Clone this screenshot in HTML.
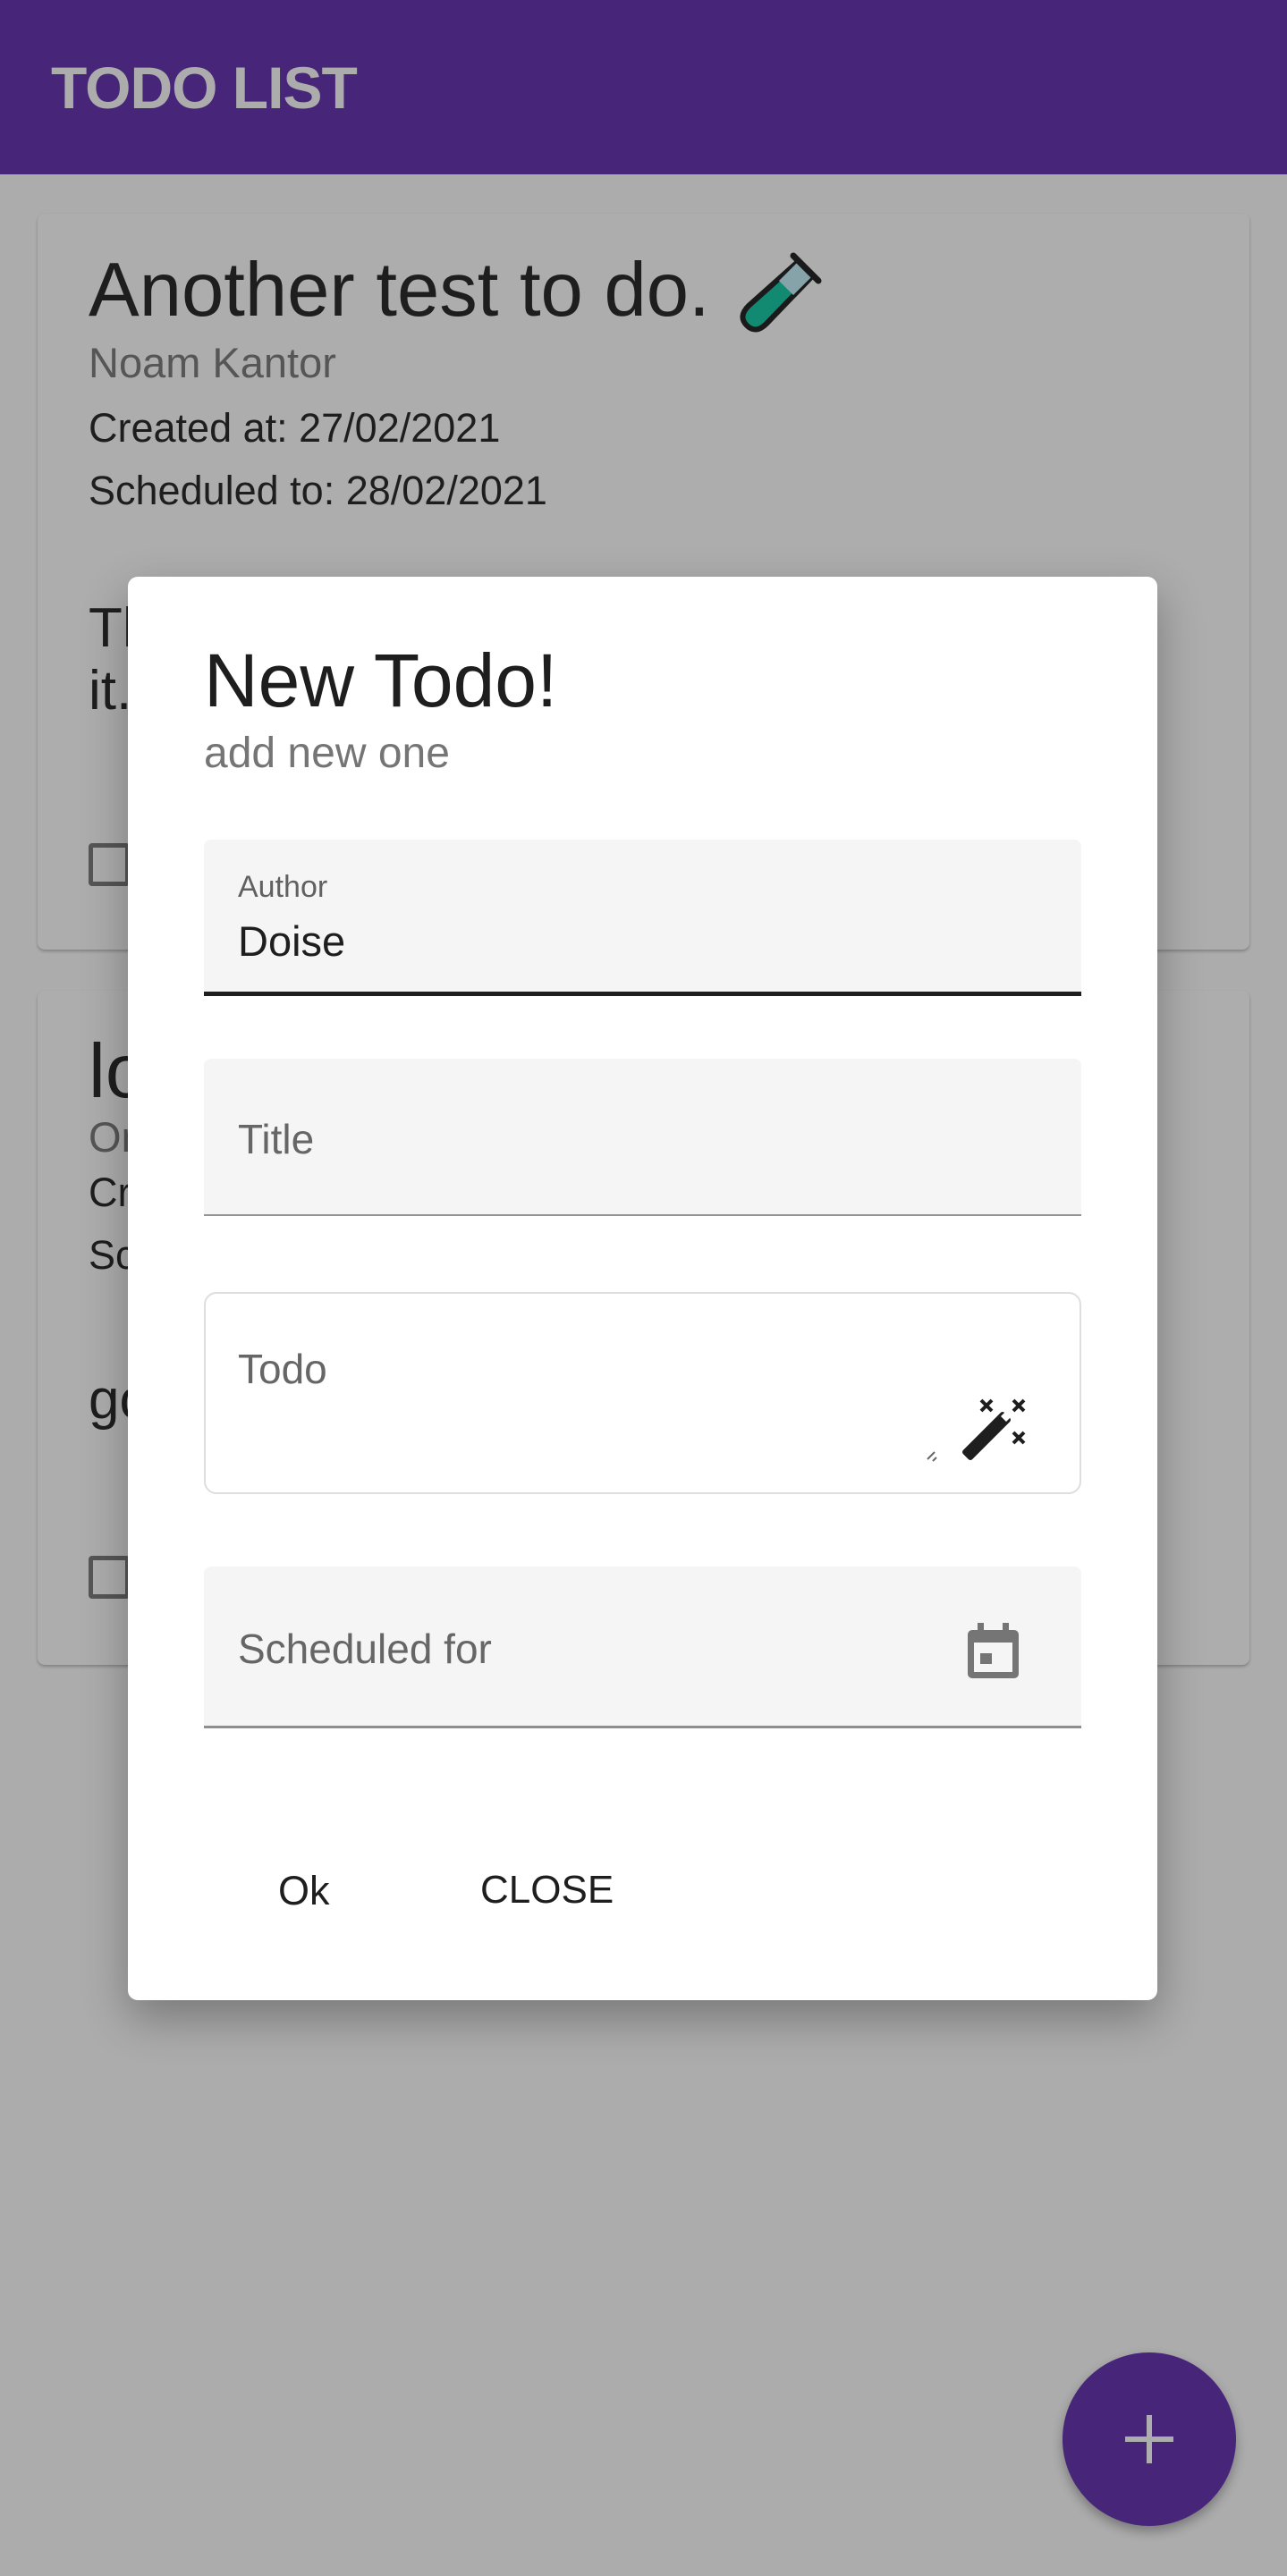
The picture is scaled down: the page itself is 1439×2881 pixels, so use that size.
<!DOCTYPE html>
<html><head><meta charset="utf-8"><style>
*{margin:0;padding:0;box-sizing:border-box}
body{width:1439px;height:2881px;background:#acacac;font-family:"Liberation Sans",Roboto,sans-serif;position:relative;overflow:hidden}
.a{position:absolute;white-space:nowrap}
.bar{position:absolute;left:0;top:0;width:1439px;height:195px;background:#47267a}
.card{position:absolute;left:42px;width:1355px;background:#adadad;border-radius:8px;box-shadow:0 2px 3px rgba(0,0,0,.25)}
.dlg{position:absolute;left:143px;top:645px;width:1151px;height:1592px;background:#fff;border-radius:11px;box-shadow:0 20px 50px rgba(0,0,0,.3)}
.fill{position:absolute;left:85px;width:981px;background:#f5f5f5;border-radius:8px 8px 0 0}
</style></head><body>
<div class="bar"></div>
<div class="a" style="left:57px;top:60px;font-size:66px;font-weight:bold;color:#acacac;letter-spacing:-1px">TODO LIST</div>

<div class="card" style="top:239px;height:823px"></div>
<div class="a" style="left:99px;top:276px;font-size:85px;color:#1e1e1e">Another test to do.</div>
<svg class="a" style="left:823px;top:278px" width="100" height="98" viewBox="0 0 100 98">
<path d="M70 14 L86 30 L34 84 Q22 96 12 86 Q2 76 14 64 Z" fill="#128a72" stroke="#1a1a1a" stroke-width="6" stroke-linejoin="round"/>
<path d="M70 14 L86 30 L64 52 L48 36 Z" fill="#86a3aa"/>
<path d="M64 8 L92 36" stroke="#1a1a1a" stroke-width="7" stroke-linecap="round"/>
</svg>
<div class="a" style="left:99px;top:378px;font-size:47px;color:#565656">Noam Kantor</div>
<div class="a" style="left:99px;top:453px;font-size:45px;color:#1e1e1e">Created at: 27/02/2021</div>
<div class="a" style="left:99px;top:523px;font-size:45px;color:#1e1e1e">Scheduled to: 28/02/2021</div>
<div class="a" style="left:99px;top:668px;font-size:62px;color:#1e1e1e;line-height:70px">Th<br>it.</div>
<div class="a" style="left:99px;top:943px;width:46px;height:48px;border:5px solid #555;border-radius:4px"></div>

<div class="card" style="top:1108px;height:754px"></div>
<div class="a" style="left:99px;top:1150px;font-size:85px;color:#1e1e1e">lo</div>
<div class="a" style="left:99px;top:1244px;font-size:47px;color:#565656">On</div>
<div class="a" style="left:99px;top:1308px;font-size:45px;color:#1e1e1e">Cr</div>
<div class="a" style="left:99px;top:1378px;font-size:45px;color:#1e1e1e">Sc</div>
<div class="a" style="left:99px;top:1530px;font-size:62px;color:#1e1e1e">go</div>
<div class="a" style="left:99px;top:1740px;width:46px;height:48px;border:5px solid #555;border-radius:4px"></div>

<div class="dlg">
<div class="a" style="left:85px;top:68px;font-size:84px;color:#1e1e1e">New Todo!</div>
<div class="a" style="left:85px;top:170px;font-size:48px;color:#757575">add new one</div>
<div class="fill" style="top:294px;height:175px;border-bottom:5px solid #1e1e1e"></div>
<div class="a" style="left:123px;top:328px;font-size:34px;color:#616161">Author</div>
<div class="a" style="left:123px;top:380px;font-size:47px;color:#1e1e1e">Doise</div>
<div class="fill" style="top:539px;height:176px;border-bottom:2px solid #949494"></div>
<div class="a" style="left:123px;top:602px;font-size:46px;color:#666">Title</div>
<div class="a" style="left:85px;top:800px;width:981px;height:226px;border:2px solid #dedede;border-radius:14px"></div>
<div class="a" style="left:123px;top:859px;font-size:46px;color:#666">Todo</div>
<svg class="a" style="left:892px;top:905px" width="120" height="90" viewBox="0 0 120 90">
<path d="M2 82 L10 74 M8 84 L12 80" stroke="#666" stroke-width="2"/>
<path d="M50 80 L44 74 L86 32 L92 38 Z" fill="#1e1e1e" stroke="#1e1e1e" stroke-width="6" stroke-linejoin="round"/>
<path d="M84 34 L90 28 L96 34 L90 40 Z" fill="#fff"/>
<path d="M62 16 L74 28 M74 16 L62 28 M98 16 L110 28 M110 16 L98 28 M98 52 L110 64 M110 52 L98 64" stroke="#1e1e1e" stroke-width="4"/>
</svg>
<div class="fill" style="top:1107px;height:181px;border-bottom:3px solid #8e8e8e"></div>
<div class="a" style="left:123px;top:1172px;font-size:46px;color:#666">Scheduled for</div>
<svg class="a" style="left:938px;top:1170px" width="60" height="64" viewBox="0 0 60 64">
<rect x="1" y="8" width="57" height="54" rx="5" fill="#757575"/>
<rect x="8" y="22" width="43" height="33" fill="#f5f5f5"/>
<rect x="12" y="0" width="7" height="12" fill="#757575"/><rect x="40" y="0" width="7" height="12" fill="#757575"/>
<rect x="15" y="34" width="13" height="12" fill="#757575"/>
</svg>
<div class="a" style="left:168px;top:1444px;font-size:45px;color:#1e1e1e;font-weight:500">Ok</div>
<div class="a" style="left:394px;top:1444px;font-size:44px;color:#1e1e1e;font-weight:500">CLOSE</div>
</div>

<div class="a" style="left:1188px;top:2631px;width:194px;height:194px;border-radius:50%;background:#47267a;box-shadow:0 6px 12px rgba(0,0,0,.3)"></div>
<div class="a" style="left:1258px;top:2725px;width:54px;height:6px;background:#adadad"></div>
<div class="a" style="left:1282px;top:2701px;width:6px;height:54px;background:#adadad"></div>
</body></html>
